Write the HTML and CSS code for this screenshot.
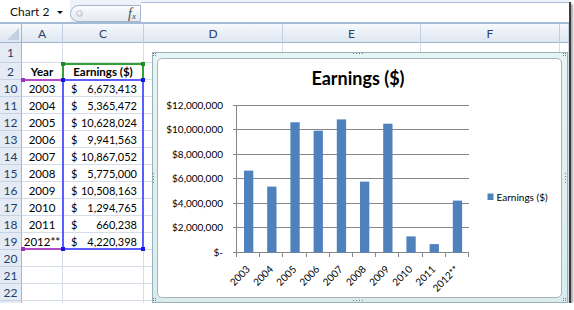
FILE: index.html
```html
<!DOCTYPE html>
<html>
<head>
<meta charset="utf-8">
<link rel="stylesheet" href="styles.css">
</head>
<body>
<div class="window">
  <div class="formula">
    <div class="namebox"><span class="name">Chart 2</span><span class="dd"></span></div>
    <div class="pill"><span class="knob"></span><span class="fx"><i>f</i><sub>x</sub></span></div>
    <div class="input"></div>
  </div>
  <div class="sheet">
    <div class="grid">
      <div class="ch corner"><span class="tri"></span></div><div class="ch">A</div><div class="ch">C</div><div class="ch">D</div><div class="ch">E</div><div class="ch">F</div><div class="ch"></div>

      <div class="rh">1</div><div></div><div></div><div></div><div></div><div></div><div></div>
      <div class="rh">2</div><div class="ctr b">Year</div><div class="ctr b">Earnings ($)</div><div></div><div></div><div></div><div></div>
      <div class="rh">10</div><div class="ctr">2003</div><div class="acct"><span>$</span><span>6,673,413</span></div><div></div><div></div><div></div><div></div>
      <div class="rh">11</div><div class="ctr">2004</div><div class="acct"><span>$</span><span>5,365,472</span></div><div></div><div></div><div></div><div></div>
      <div class="rh">12</div><div class="ctr">2005</div><div class="acct"><span>$</span><span>10,628,024</span></div><div></div><div></div><div></div><div></div>
      <div class="rh">13</div><div class="ctr">2006</div><div class="acct"><span>$</span><span>9,941,563</span></div><div></div><div></div><div></div><div></div>
      <div class="rh">14</div><div class="ctr">2007</div><div class="acct"><span>$</span><span>10,867,052</span></div><div></div><div></div><div></div><div></div>
      <div class="rh">15</div><div class="ctr">2008</div><div class="acct"><span>$</span><span>5,775,000</span></div><div></div><div></div><div></div><div></div>
      <div class="rh">16</div><div class="ctr">2009</div><div class="acct"><span>$</span><span>10,508,163</span></div><div></div><div></div><div></div><div></div>
      <div class="rh">17</div><div class="ctr">2010</div><div class="acct"><span>$</span><span>1,294,765</span></div><div></div><div></div><div></div><div></div>
      <div class="rh">18</div><div class="ctr">2011</div><div class="acct"><span>$</span><span>660,238</span></div><div></div><div></div><div></div><div></div>
      <div class="rh">19</div><div class="ctr">2012**</div><div class="acct"><span>$</span><span>4,220,398</span></div><div></div><div></div><div></div><div></div>
      <div class="rh">20</div><div></div><div></div><div></div><div></div><div></div><div></div>
      <div class="rh">21</div><div></div><div></div><div></div><div></div><div></div><div></div>
      <div class="rh">22</div><div></div><div></div><div></div><div></div><div></div><div></div>
      <div class="rh"></div><div></div><div></div><div></div><div></div><div></div><div></div>
    </div>

    <div class="sel sel-purple"></div>
    <div class="sel sel-green"></div>
    <div class="sel sel-blue"></div>
    <span class="hd hd-g" style="left:61px;top:38px"></span>
    <span class="hd hd-g" style="left:141px;top:38px"></span>
    <span class="hd hd-b" style="left:61px;top:54px"></span>
    <span class="hd hd-b" style="left:141px;top:54px"></span>
    <span class="hd hd-b" style="left:61px;top:223px"></span>
    <span class="hd hd-b" style="left:141px;top:223px"></span>
    <span class="hd hd-p" style="left:21px;top:54px"></span>
    <span class="hd hd-p" style="left:21px;top:223px"></span>

    <div class="chart">
      <span class="dots dots-c" style="left:0;top:0"></span>
      <span class="dots dots-c" style="left:410px;top:0"></span>
      <span class="dots dots-c" style="left:0;top:245px"></span>
      <span class="dots dots-c" style="left:410px;top:245px"></span>
      <span class="dots dots-h" style="left:200px;top:0"></span>
      <span class="dots dots-h" style="left:200px;top:247px"></span>
      <span class="dots dots-v" style="left:0;top:120px"></span>
      <span class="dots dots-v" style="left:412px;top:120px"></span>
      <div class="plot">
        <svg width="403" height="238" viewBox="0 0 403 238" xmlns="http://www.w3.org/2000/svg">
          <g transform="translate(-158,-59)">
            <text class="title" x="358" y="85" text-anchor="middle">Earnings ($)</text>
            <g class="grid-lines" stroke="#878787" stroke-width="1" shape-rendering="crispEdges">
              <line x1="233" y1="105.5" x2="469" y2="105.5"/>
              <line x1="233" y1="129.5" x2="469" y2="129.5"/>
              <line x1="233" y1="154.5" x2="469" y2="154.5"/>
              <line x1="233" y1="178.5" x2="469" y2="178.5"/>
              <line x1="233" y1="203.5" x2="469" y2="203.5"/>
              <line x1="233" y1="227.5" x2="469" y2="227.5"/>
              <line x1="233" y1="252.5" x2="469" y2="252.5"/>
              <line x1="236.5" y1="105" x2="236.5" y2="257"/>
              <line x1="259.7" y1="252" x2="259.7" y2="257"/>
              <line x1="282.9" y1="252" x2="282.9" y2="257"/>
              <line x1="306.1" y1="252" x2="306.1" y2="257"/>
              <line x1="329.3" y1="252" x2="329.3" y2="257"/>
              <line x1="352.5" y1="252" x2="352.5" y2="257"/>
              <line x1="375.7" y1="252" x2="375.7" y2="257"/>
              <line x1="398.9" y1="252" x2="398.9" y2="257"/>
              <line x1="422.1" y1="252" x2="422.1" y2="257"/>
              <line x1="445.3" y1="252" x2="445.3" y2="257"/>
              <line x1="468.5" y1="252" x2="468.5" y2="257"/>
            </g>
            <g class="ylab" text-anchor="end">
              <text x="223" y="109">$12,000,000</text>
              <text x="223" y="133">$10,000,000</text>
              <text x="223" y="158">$8,000,000</text>
              <text x="223" y="182">$6,000,000</text>
              <text x="223" y="207">$4,000,000</text>
              <text x="223" y="231">$2,000,000</text>
              <text x="223" y="256">$-</text>
            </g>
            <g class="bars" fill="#4f81bd">
              <rect x="244" y="170.6" width="9.3" height="81.9"/>
              <rect x="267.2" y="186.6" width="9.3" height="65.9"/>
              <rect x="290.4" y="122.3" width="9.3" height="130.2"/>
              <rect x="313.6" y="130.7" width="9.3" height="121.8"/>
              <rect x="336.8" y="119.4" width="9.3" height="133.1"/>
              <rect x="360" y="181.6" width="9.3" height="70.9"/>
              <rect x="383.2" y="123.7" width="9.3" height="128.8"/>
              <rect x="406.4" y="236.4" width="9.3" height="16.1"/>
              <rect x="429.6" y="244.1" width="9.3" height="8.4"/>
              <rect x="452.8" y="200.6" width="9.3" height="51.9"/>
            </g>
            <g class="xlab" text-anchor="end">
              <text transform="translate(250.6,270) rotate(-45)">2003</text>
              <text transform="translate(273.8,270) rotate(-45)">2004</text>
              <text transform="translate(297,270) rotate(-45)">2005</text>
              <text transform="translate(320.2,270) rotate(-45)">2006</text>
              <text transform="translate(343.4,270) rotate(-45)">2007</text>
              <text transform="translate(366.6,270) rotate(-45)">2008</text>
              <text transform="translate(389.8,270) rotate(-45)">2009</text>
              <text transform="translate(413,270) rotate(-45)">2010</text>
              <text transform="translate(436.2,270) rotate(-45)">2011</text>
              <text transform="translate(459.4,270) rotate(-45)">2012**</text>
            </g>
            <rect x="487.5" y="193.5" width="6" height="6.5" fill="#4f81bd"/>
            <text class="legend" x="496.5" y="201">Earnings ($)</text>
          </g>
        </svg>
      </div>
    </div>
  </div>
</div>
</body>
</html>
```

FILE: styles.css
```css
* {
  box-sizing: border-box;
  margin: 0;
  padding: 0;
}

body {
  margin: 0;
  background: #ffffff;
  font-family: Lato, "Noto Sans", sans-serif;
}

.window {
  position: relative;
  width: 569px;
  height: 303px;
  overflow: hidden;
  background: #ffffff;
  box-shadow: 2px 2px 0 #3c3c3c, 4px 4px 2px rgba(0, 0, 0, 0.35);
}

/* ---------- formula bar ---------- */
.formula {
  display: flex;
  height: 24px;
  background: #eef3f9;
  border-bottom: 2px solid #a4bbd8;
}

.namebox {
  width: 70px;
  height: 22px;
  background: #ffffff;
  display: flex;
  align-items: center;
  padding-left: 10px;
  font-size: 12px;
  color: #111;
}

.namebox .name {
  flex: 1;
}

.namebox .dd {
  width: 0;
  height: 0;
  margin-right: 7px;
  margin-top: 2px;
  border-left: 3px solid transparent;
  border-right: 3px solid transparent;
  border-top: 3px solid #111;
}

.pill {
  width: 71px;
  height: 17px;
  margin-top: 5px;
  border: 1px solid #a3b6cc;
  border-radius: 9px 0 0 9px;
  background: linear-gradient(#fbfcfd, #e3e9f1);
  display: flex;
  align-items: center;
  justify-content: space-between;
  padding: 0 4px 0 5px;
}

.knob {
  width: 7px;
  height: 7px;
  border-radius: 50%;
  border: 1px solid #c4cbd3;
  background: radial-gradient(circle at 40% 35%, #ffffff, #b8c1cb);
}

.fx {
  font-family: "Liberation Serif", serif;
  font-size: 14px;
  color: #4a4a4a;
  line-height: 1;
}

.fx sub {
  font-size: 9px;
  font-style: italic;
  vertical-align: -1px;
}

.input {
  flex: 1;
  height: 20px;
  margin-top: 2px;
  border-top: 1px solid #a9bdd6;
  background: #ffffff;
}

/* ---------- sheet ---------- */
.sheet {
  position: relative;
  height: 279px;
}

.grid {
  display: grid;
  grid-template-columns: 22px 41px 81px 139px 138px 139px 9px;
  grid-template-rows: 19px 20px repeat(14, 17px) 17px;
  font-size: 11.5px;
  color: #000;
}

.grid > div {
  border-right: 1px solid #d5dde9;
  border-bottom: 1px solid #d5dde9;
}

.grid > .ch {
  background: linear-gradient(#f7f9fc, #dde6f1);
  border-right-color: #c2d0e2;
  border-bottom-color: #9eb6ce;
  color: #2a4466;
  font-size: 12px;
  display: flex;
  align-items: center;
  justify-content: center;
}

.grid > .corner {
  align-items: flex-end;
  justify-content: flex-end;
  padding: 0 2px 2px 0;
  border-right-color: #9eb6ce;
}

.tri {
  width: 0;
  height: 0;
  border-left: 12px solid transparent;
  border-bottom: 12px solid #c2d0e1;
}

.grid > .rh {
  background: #e4ebf5;
  border-right-color: #9eb6ce;
  border-bottom-color: #c5d2e3;
  color: #1f3d68;
  font-size: 12px;
  display: flex;
  align-items: center;
  justify-content: center;
}

.ctr {
  display: flex;
  align-items: center;
  justify-content: center;
}

.b {
  font-weight: 700;
}

.acct {
  display: flex;
  align-items: center;
  justify-content: space-between;
  padding: 0 6px 0 8px;
  font-size: 11px;
}

/* ---------- selection ---------- */
.sel {
  position: absolute;
}

.sel-green {
  left: 62px;
  top: 39px;
  width: 82px;
  height: 18px;
  border: 2px solid #33a033;
  border-bottom: none;
}

.sel-blue {
  left: 62px;
  top: 55px;
  width: 82px;
  height: 171px;
  border: 2px solid #5d5dff;
}

.sel-purple {
  left: 22px;
  top: 55px;
  width: 41px;
  height: 171px;
  border-top: 2px solid #b24ac8;
  border-bottom: 2px solid #b24ac8;
}

.hd {
  position: absolute;
  width: 4px;
  height: 4px;
}

.hd-g {
  background: #1e8f1e;
}

.hd-b {
  background: #1414f0;
}

.hd-p {
  background: #a030c0;
}

/* ---------- chart ---------- */
.chart {
  position: absolute;
  left: 152px;
  top: 28px;
  width: 416px;
  height: 251px;
  border: 1px solid #9ab0ba;
  background: linear-gradient(#e6f4f4, #d8ecee);
  padding: 5px 5px 4px 4px;
}

.plot {
  height: 100%;
  border: 1px solid #a9b4b8;
  border-radius: 5px;
  background: #ffffff;
  overflow: hidden;
}

.plot svg {
  display: block;
  font-family: Lato, "Noto Sans", sans-serif;
}

.title {
  font-size: 18px;
  font-weight: 700;
  fill: #000;
}

.ylab,
.xlab,
.legend {
  font-size: 10px;
  fill: #000;
}

.dots {
  position: absolute;
  width: 1px;
  height: 1px;
  background: #6f7f8a;
}

.dots-c {
  box-shadow: 2px 0 #6f7f8a, 0 2px #6f7f8a, 2px 2px #6f7f8a;
}

.dots-h {
  box-shadow: 3px 0 #6f7f8a, 6px 0 #6f7f8a, 9px 0 #6f7f8a;
}

.dots-v {
  box-shadow: 0 3px #6f7f8a, 0 6px #6f7f8a, 0 9px #6f7f8a;
}
```
